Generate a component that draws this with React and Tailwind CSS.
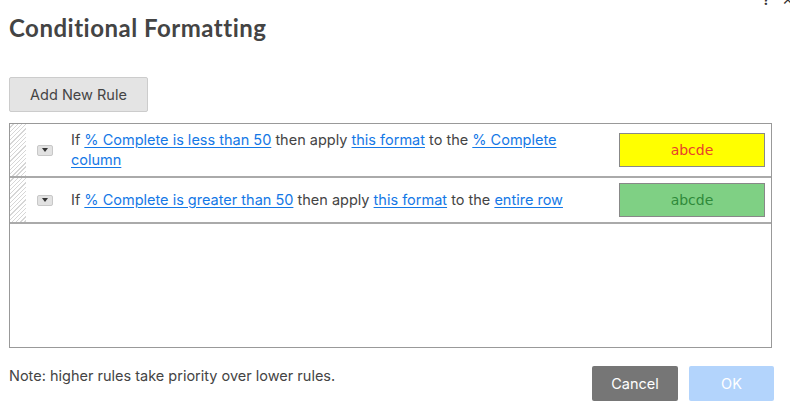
import React from "react";

const rules = [
  {
    parts: [
      { t: "If " },
      { t: "% Complete is less than 50", link: true },
      { t: " then apply " },
      { t: "this format", link: true },
      { t: " to the " },
      { t: "% Complete column", link: true },
    ],
    swatch: "bg-[#ffff00] text-[#e8412c]",
  },
  {
    parts: [
      { t: "If " },
      { t: "% Complete is greater than 50", link: true },
      { t: " then apply " },
      { t: "this format", link: true },
      { t: " to the " },
      { t: "entire row", link: true },
    ],
    swatch: "bg-[#7fd084] text-[#2f8a3a]",
  },
];

function RuleRow({ rule }) {
  return (
    <div className="flex items-stretch border-b-2 border-[#aaaaaa]">
      {/* hatched drag handle */}
      <div className="w-[16px] shrink-0 bg-[repeating-linear-gradient(135deg,#ffffff_0px,#ffffff_2px,#d6d6d6_2px,#d6d6d6_3px)]" />
      <div className="flex flex-1 items-center py-[5px]">
        <button className="ml-[11px] mr-[18px] flex h-[11px] w-[16px] shrink-0 items-center justify-center rounded-[2px] border border-[#c8c8c8] bg-[#e2e2e2]">
          <span className="block h-0 w-0 border-x-[3px] border-t-[4px] border-x-transparent border-t-[#333]" />
        </button>
        <p className="mr-[29px] flex-1 py-[1px] text-[14.5px] leading-5 text-[#444]">
          {rule.parts.map((p, i) =>
            p.link ? (
              <a key={i} className="cursor-pointer text-[#1478e6] underline underline-offset-2">
                {p.t}
              </a>
            ) : (
              <span key={i}>{p.t}</span>
            )
          )}
        </p>
        <div
          className={`mr-[6px] flex h-[34px] w-[146px] shrink-0 items-center justify-center border border-[#888] font-['DejaVu_Sans',sans-serif] text-[14px] font-normal ${rule.swatch}`}
        >
          abcde
        </div>
      </div>
    </div>
  );
}

export default function App() {
  return (
    <div className="relative h-[416px] w-[790px] overflow-hidden bg-white font-['Inter',sans-serif] text-[#444]">
      {/* window controls cut off at top */}
      <div className="absolute right-[-4px] top-[-11px] flex gap-[12px] text-[14px] font-bold text-[#333]">
        <span>?</span>
        <span className="font-normal">✕</span>
      </div>

      <div className="px-[9px] pt-[13px]">
        <h1 className="font-['Lato',sans-serif] text-[24px] font-bold leading-[29px] tracking-[0.5px] text-[#444]">
          Conditional Formatting
        </h1>

        <button className="mt-[35px] h-[35px] w-[139px] rounded-[2px] border border-[#cccccc] bg-[#e4e4e4] text-[14.5px] text-[#444]">
          Add New Rule
        </button>

        <div className="mt-[11px] h-[225px] w-[763px] border border-[#999]">
          {rules.map((r, i) => (
            <RuleRow key={i} rule={r} />
          ))}
        </div>

        <div className="mt-[18px] flex items-start justify-between pr-[7px]">
          <p className="text-[14.5px] leading-5 text-[#444]">
            Note: higher rules take priority over lower rules.
          </p>
          <div className="flex gap-[11px]">
            <button className="h-[35px] w-[86px] rounded-[2px] bg-[#767676] text-[14.5px] text-white">
              Cancel
            </button>
            <button className="h-[35px] w-[85px] rounded-[2px] bg-[#b3d4fc] text-[14.5px] text-white">
              OK
            </button>
          </div>
        </div>
      </div>
    </div>
  );
}
